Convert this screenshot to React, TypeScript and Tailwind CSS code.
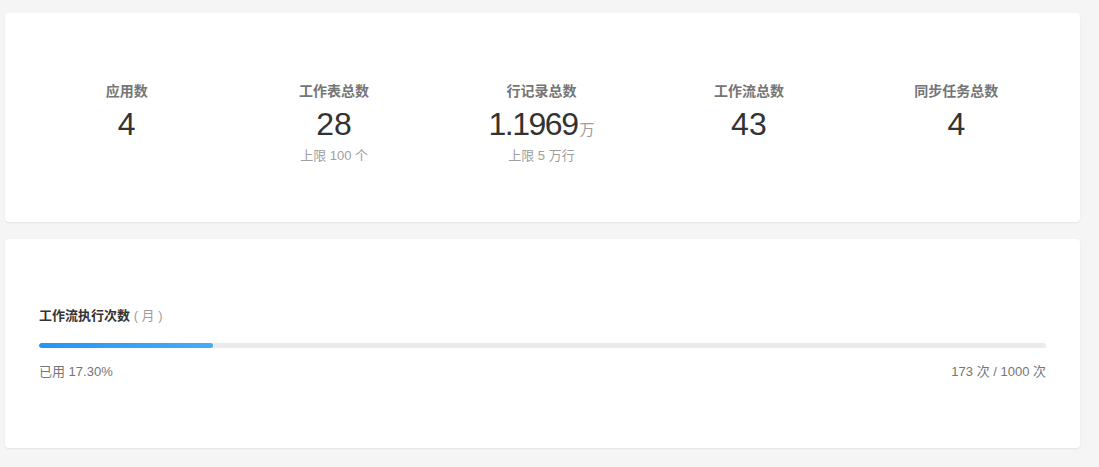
import React from "react";

const font = { fontFamily: '"Liberation Sans", Arial, "Noto Sans CJK SC", sans-serif' };

type Stat = { label: string; value: string; unit?: string; sub?: string; tight?: boolean };

const stats: Stat[] = [
  { label: "应用数", value: "4" },
  { label: "工作表总数", value: "28", sub: "上限 100 个" },
  { label: "行记录总数", value: "1.1969", unit: "万", sub: "上限 5 万行", tight: true },
  { label: "工作流总数", value: "43" },
  { label: "同步任务总数", value: "4" },
];

export default function App() {
  const used = 173;
  const total = 1000;
  const pct = (used / total) * 100;
  return (
    <div
      className="min-h-screen w-full bg-[#f5f5f5] pt-[13px] pl-[5px] pr-[19px] pb-[19px] flex flex-col gap-[17px]"
      style={font}
    >
      <div className="h-[209px] bg-white rounded-[4px] shadow-[0_1px_2px_rgba(0,0,0,0.08)] pt-[69px] pl-[18px] pr-[20px] grid grid-cols-5">
        {stats.map((s) => (
          <div key={s.label} className="flex flex-col items-center">
            <div className="text-[14px] leading-[18px] font-bold text-[#757575]">{s.label}</div>
            <div className="mt-[8px] h-[32px] text-[32px] leading-[32px] text-[#333333] whitespace-nowrap">
              <span className={s.tight ? "tracking-[-1.5px]" : ""}>{s.value}</span>
              {s.unit && (
                <span className="text-[15px] leading-none text-[#9e9e9e] ml-[2px]">{s.unit}</span>
              )}
            </div>
            {s.sub && (
              <div className="mt-[7px] text-[13px] leading-[18px] text-[#9e9e9e]">{s.sub}</div>
            )}
          </div>
        ))}
      </div>

      <div className="h-[209px] bg-white rounded-[4px] shadow-[0_1px_2px_rgba(0,0,0,0.08)] pt-[68px] px-[34px] flex flex-col">
        <div className="text-[13px] leading-[18px] font-bold text-[#333333]">
          工作流执行次数<span className="font-normal text-[#9e9e9e] whitespace-pre"> ( 月 )</span>
        </div>
        <div className="mt-[18px] h-[5px] w-full rounded-full bg-[#eaeaea] overflow-hidden">
          <div
            className="h-full rounded-full bg-gradient-to-r from-[#2196f3] to-[#48abf7]"
            style={{ width: `${pct}%` }}
          />
        </div>
        <div className="mt-[15px] flex justify-between text-[13px] leading-[18px] text-[#757575]">
          <span>已用 17.30%</span>
          <span>173 次 / 1000 次</span>
        </div>
      </div>
    </div>
  );
}
